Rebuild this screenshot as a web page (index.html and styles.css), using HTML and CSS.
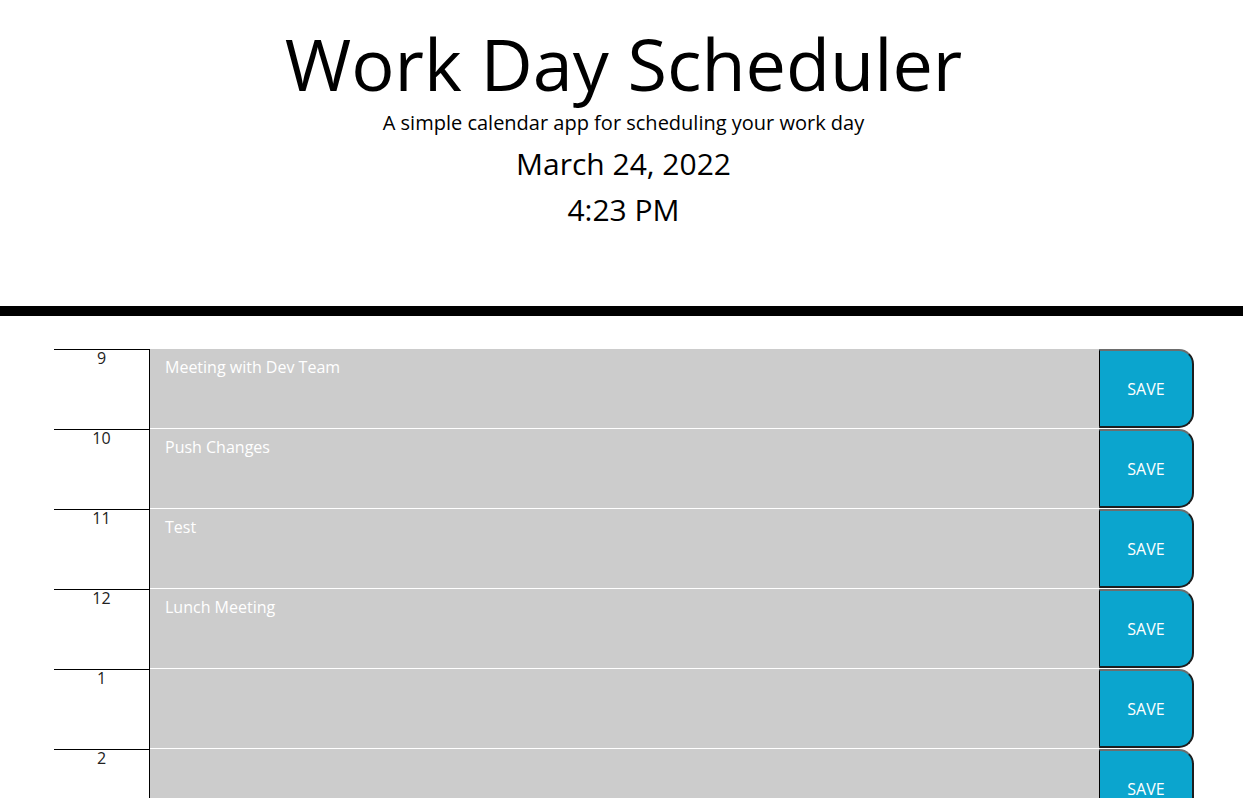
FILE: index.html
```html
<!DOCTYPE html>
<html lang="en">
<head>
<meta charset="utf-8">
<title>Work Day Scheduler</title>
<link rel="stylesheet" href="styles.css">
</head>
<body>
<header class="jumbotron">
  <h1 class="title">Work Day Scheduler</h1>
  <p class="lead">A simple calendar app for scheduling your work day</p>
  <p class="date">March 24, 2022</p>
  <p class="time">4:23 PM</p>
</header>
<main class="container">
  <div class="time-block">
    <div class="hour">9</div>
    <textarea class="description">Meeting with Dev Team</textarea>
    <button class="saveBtn">SAVE</button>
  </div>
  <div class="time-block">
    <div class="hour">10</div>
    <textarea class="description">Push Changes</textarea>
    <button class="saveBtn">SAVE</button>
  </div>
  <div class="time-block">
    <div class="hour">11</div>
    <textarea class="description">Test</textarea>
    <button class="saveBtn">SAVE</button>
  </div>
  <div class="time-block">
    <div class="hour">12</div>
    <textarea class="description">Lunch Meeting</textarea>
    <button class="saveBtn">SAVE</button>
  </div>
  <div class="time-block">
    <div class="hour">1</div>
    <textarea class="description"></textarea>
    <button class="saveBtn">SAVE</button>
  </div>
  <div class="time-block">
    <div class="hour">2</div>
    <textarea class="description"></textarea>
    <button class="saveBtn">SAVE</button>
  </div>
  <div class="time-block">
    <div class="hour">3</div>
    <textarea class="description"></textarea>
    <button class="saveBtn">SAVE</button>
  </div>
</main>
</body>
</html>
```

FILE: styles.css
```css
* { box-sizing: border-box; }
body {
  margin: 0;
  font-family: "Open Sans", "Liberation Sans", sans-serif;
  color: #000;
  background: #fff;
}
.jumbotron {
  text-align: center;
  padding: 19px 12px 0 16px;
  height: 316px;
  border-bottom: 10px solid #000;
  margin-bottom: 33px;
}
.title {
  margin: 0;
  font-size: 72px;
  font-weight: 400;
  line-height: 88px;
}
.lead {
  margin: 0;
  font-size: 20px;
  line-height: 30px;
  padding-top: 1px;
}
.date {
  margin: 3px 0 0;
  font-size: 30px;
  line-height: 46px;
}
.time {
  margin: 0;
  font-size: 30px;
  line-height: 46px;
}
.container {
  width: 1140px;
  margin-left: 54px;
}
.time-block {
  display: grid;
  grid-template-columns: 96px 949px 95px;
  height: 80px;
}
.hour {
  border-top: 1px solid #000;
  border-right: 1px solid #000;
  text-align: center;
  font-size: 16px;
  line-height: 14px;
  padding-top: 1px;
  color: #222;
}
.description {
  display: block;
  width: 100%;
  height: 80px;
  margin: 0;
  border: 0;
  border-bottom: 1px solid #fff;
  background: #cccccc;
  color: #fff;
  font-family: "Open Sans", "Liberation Sans", sans-serif;
  font-size: 16px;
  line-height: 22px;
  padding: 7px 15px;
  resize: none;
  outline: none;
}
.saveBtn {
  height: 79px;
  margin: 0;
  padding: 0;
  background: #0ba5ce;
  color: #fff;
  font-family: "Open Sans", "Liberation Sans", sans-serif;
  font-size: 16px;
  border-left: 1px solid #000;
  border-top: 2px solid #6d6d6d;
  border-right: 2px solid #1e1e1e;
  border-bottom: 2px solid #1e1e1e;
  border-top-right-radius: 15px;
  border-bottom-right-radius: 15px;
}
```
